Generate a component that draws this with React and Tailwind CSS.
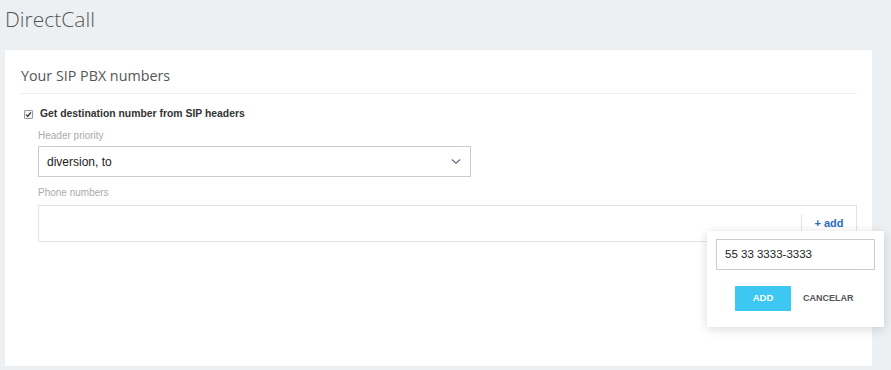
import React from "react";

export default function App() {
  return (
    <div className="w-[891px] h-[370px] bg-[#edf0f3] overflow-hidden relative" style={{ fontFamily: "'Liberation Sans', Arial, sans-serif" }}>
      <div className="h-[50px] pl-[5px] pt-[5px]">
        <h1 className="text-[21px] leading-[28px] text-[#555] font-light" style={{ fontFamily: "'Open Sans', sans-serif" }}>DirectCall</h1>
      </div>
      <div className="ml-[5px] w-[867px] h-[316px] bg-white px-[15px] pt-[16px]">
        <div className="border-b border-[#eeeeee] pb-[7px] pl-[1px]">
          <h2 className="text-[14.3px] leading-[20px] text-[#555]" style={{ fontFamily: "'Open Sans', sans-serif" }}>Your SIP PBX numbers</h2>
        </div>
        <div className="pl-[18px] pr-0">
          <label className="flex items-center mt-[13px] -ml-[14px] gap-[7px]">
            <span className="w-[9px] h-[9px] border border-[#999] bg-[#f3f3f3] rounded-[1px] flex items-center justify-center">
              <svg viewBox="0 0 10 10" className="w-[7px] h-[7px]"><path d="M1.5 5.2 L4 7.5 L8.5 2" fill="none" stroke="#333" strokeWidth="1.8" /></svg>
            </span>
            <span className="text-[10.4px] font-bold text-[#333] leading-[14px]">Get destination number from SIP headers</span>
          </label>
          <div className="mt-[8px] text-[10px] leading-[13px] text-[#aaa]">Header priority</div>
          <div className="mt-[4px] w-[433px] h-[31px] border border-[#c9cdd2] flex items-center justify-between pl-[8px] pr-[9px]">
            <span className="text-[12px] text-[#222]">diversion, to</span>
            <svg viewBox="0 0 12 8" className="w-[10px] h-[7px]"><path d="M1 1.5 L6 6 L11 1.5" fill="none" stroke="#6b7280" strokeWidth="1.6" /></svg>
          </div>
          <div className="mt-[9px] text-[10px] leading-[13px] text-[#aaa]">Phone numbers</div>
          <div className="mt-[6px] h-[37px] border border-[#e3e3e3] flex justify-end">
            <div className="border-l border-[#e3e3e3] mt-[8px] w-[55px] flex items-start justify-center pt-[2px]">
              <span className="text-[11px] font-bold text-[#2a6ebb] leading-[14px]">+ add</span>
            </div>
          </div>
        </div>
      </div>
      <div className="absolute left-[707px] top-[231px] w-[177px] h-[96px] bg-white shadow-[0_2px_10px_rgba(0,0,0,0.15)] pt-[8px] px-[9px]">
        <div className="h-[31px] border border-[#c9cdd2] flex items-center pl-[8px]">
          <span className="text-[11.5px] text-[#222]">55 33 3333-3333</span>
        </div>
        <div className="flex items-center mt-[16px] ml-[19px]">
          <button className="w-[56px] h-[25px] bg-[#3cc8f2] text-white text-[9.5px] font-bold rounded-[1px]">ADD</button>
          <span className="ml-[12px] text-[9px] font-bold text-[#555]">CANCELAR</span>
        </div>
      </div>
    </div>
  );
}
